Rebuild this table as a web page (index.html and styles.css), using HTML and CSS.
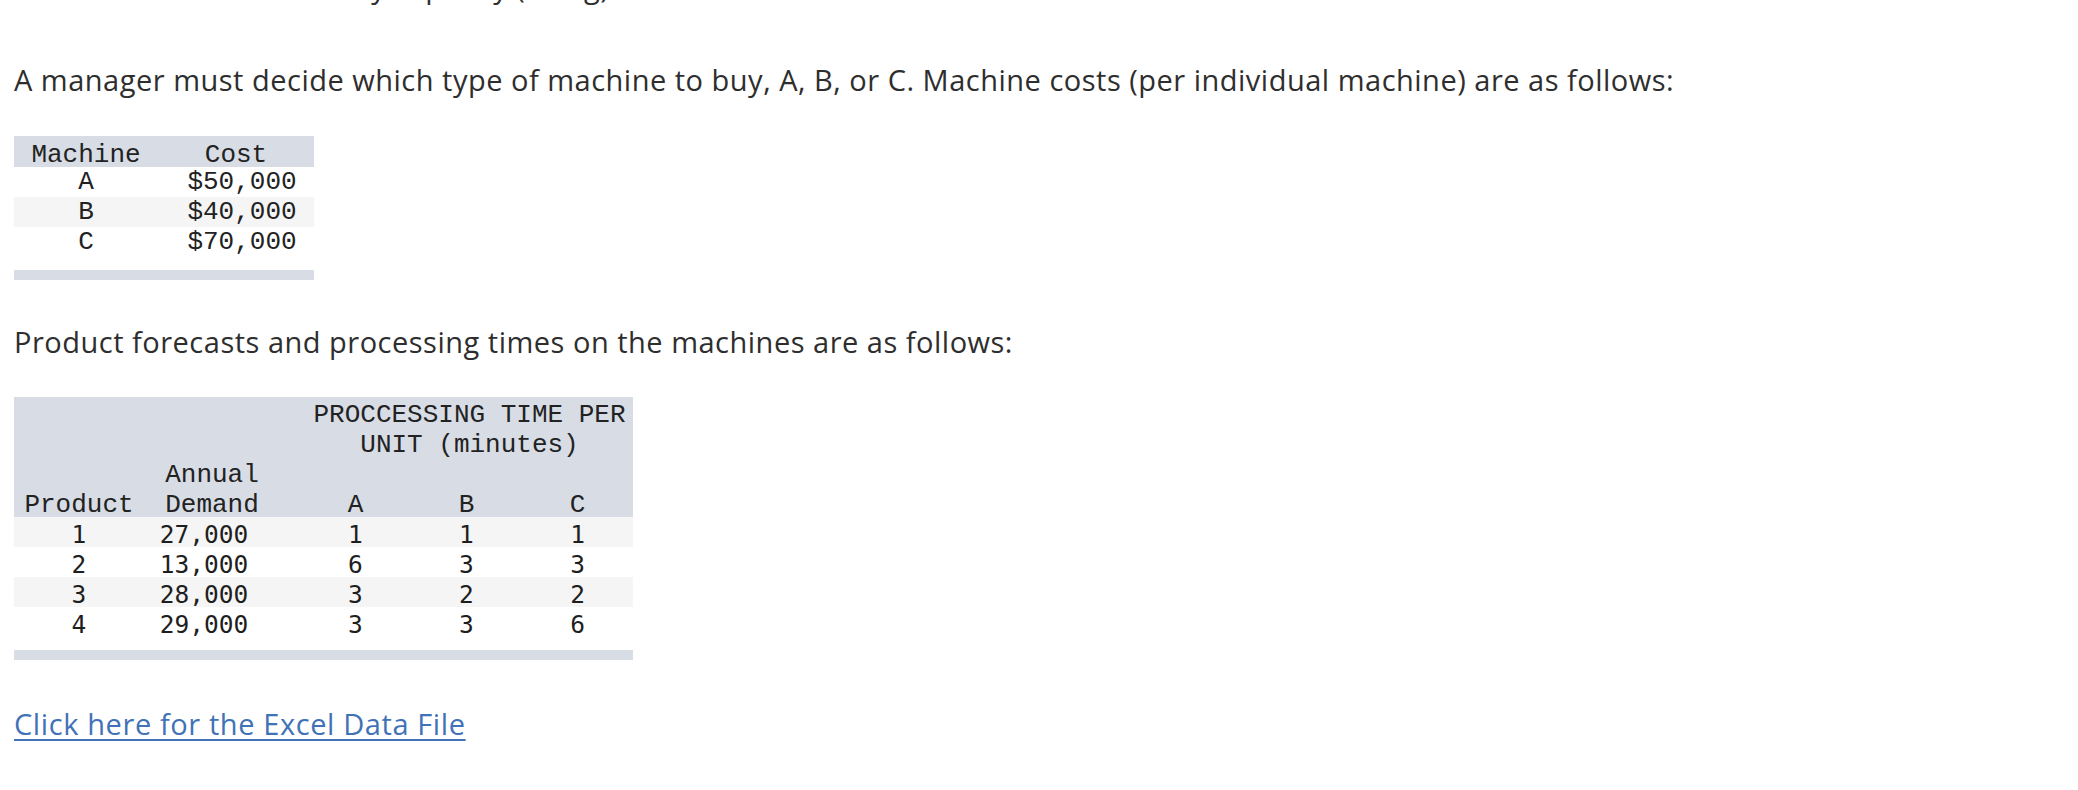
FILE: index.html
```html
<!DOCTYPE html>
<html lang="en">
<head>
<meta charset="utf-8">
<title>Machine selection</title>
<link rel="stylesheet" href="styles.css">
</head>
<body>
<div class="page">
  <p class="para cut">Determine the total hourly capacity (using)</p>
  <p class="para p1">A manager must decide which type of machine to buy, A, B, or C. Machine costs (per individual machine) are as follows:</p>

  <table class="tbl t1">
    <thead>
      <tr><th class="m-col">Machine</th><th class="c-col">Cost</th></tr>
    </thead>
    <tbody>
      <tr><td>A</td><td class="cost">$50,000</td></tr>
      <tr class="alt"><td>B</td><td class="cost">$40,000</td></tr>
      <tr><td>C</td><td class="cost">$70,000</td></tr>
      <tr class="gap"><td colspan="2"></td></tr>
    </tbody>
    <tfoot>
      <tr class="foot"><td colspan="2"></td></tr>
    </tfoot>
  </table>

  <p class="para p2">Product forecasts and processing times on the machines are as follows:</p>

  <table class="tbl t2">
    <colgroup>
      <col class="pc-col">
      <col class="dc-col">
      <col class="xc-col">
      <col class="xc-col">
      <col class="xc-col">
    </colgroup>
    <thead>
      <tr>
        <th></th>
        <th></th>
        <th colspan="3" class="span3">PROCCESSING TIME PER</th>
      </tr>
      <tr>
        <th></th>
        <th></th>
        <th colspan="3" class="span3">UNIT (minutes)</th>
      </tr>
      <tr>
        <th></th>
        <th class="dc">Annual</th>
        <th></th>
        <th></th>
        <th></th>
      </tr>
      <tr>
        <th>Product</th>
        <th class="dc">Demand</th>
        <th>A</th>
        <th>B</th>
        <th>C</th>
      </tr>
    </thead>
    <tbody>
      <tr class="alt"><td>1</td><td class="dc">27,000</td><td>1</td><td>1</td><td>1</td></tr>
      <tr><td>2</td><td class="dc">13,000</td><td>6</td><td>3</td><td>3</td></tr>
      <tr class="alt"><td>3</td><td class="dc">28,000</td><td>3</td><td>2</td><td>2</td></tr>
      <tr><td>4</td><td class="dc">29,000</td><td>3</td><td>3</td><td>6</td></tr>
      <tr class="gap"><td colspan="5"></td></tr>
    </tbody>
    <tfoot>
      <tr class="foot"><td colspan="5"></td></tr>
    </tfoot>
  </table>

  <p class="para link-line"><a class="xl-link" href="#">Click here for the Excel Data File</a></p>
</div>
</body>
</html>
```

FILE: styles.css
```css
html, body {
  margin: 0;
  padding: 0;
  background: #ffffff;
}

.page {
  padding: 0 14px;
  overflow: hidden;
  height: 790px;
  box-sizing: border-box;
}

.para {
  font-family: "Open Sans", "Noto Sans", sans-serif;
  font-size: 29px;
  letter-spacing: 0.5px;
  line-height: 40px;
  color: #2e2e2e;
  margin: 0;
  white-space: nowrap;
}

.cut {
  margin-top: -33px;
}

.p1 {
  margin-top: 53px;
}

.p2 {
  margin-top: 42px;
}

.link-line {
  margin-top: 44px;
}

.xl-link {
  color: #3f72b7;
  text-decoration: underline;
  text-decoration-thickness: 2px;
  text-underline-offset: 4px;
  letter-spacing: 0.6px;
}

.tbl {
  border-collapse: collapse;
  border-spacing: 0;
  font-family: "Liberation Mono", "Courier New", monospace;
  font-size: 26px;
  color: #222222;
  table-layout: fixed;
}

.tbl th,
.tbl td {
  padding: 0;
  height: 30px;
  line-height: 30px;
  text-align: center;
  font-weight: normal;
  white-space: nowrap;
}

.tbl thead th {
  background: #d8dce5;
}

.tbl tr.alt td {
  background: #f5f5f5;
}

.tbl tr.gap td {
  height: 13px;
  line-height: 13px;
}

.tbl tr.foot td {
  height: 10px;
  line-height: 10px;
  background: #d8dce5;
}

/* table 1 */
.t1 {
  margin-top: 36px;
  width: 300px;
}

.t1 thead th {
  padding-top: 7px;
  height: 24px;
  line-height: 24px;
}

.t1 .m-col {
  width: 144px;
}

.t1 .c-col {
  width: 156px;
}

.t1 .cost {
  padding-left: 12px;
}

/* table 2 */
.t2 {
  margin-top: 35px;
  width: 619px;
}

.t2 .pc-col {
  width: 130px;
}

.t2 .dc-col {
  width: 156px;
}

.t2 .xc-col {
  width: 111px;
}

.t2 thead th {
  padding-top: 6px;
  height: 24px;
  line-height: 24px;
}

.t2 tbody tr:not(.gap) td {
  padding-top: 5px;
  height: 25px;
  line-height: 25px;
}

.t2 .span3 {
  padding-left: 6px;
}

.t2 thead th.dc {
  padding-right: 20px;
}

.t2 tbody td {
  font-family: "DejaVu Sans Mono", Menlo, monospace;
  font-size: 24.5px;
  color: #1e1e1e;
}

.t2 tbody td.dc {
  padding-right: 36px;
}
```
